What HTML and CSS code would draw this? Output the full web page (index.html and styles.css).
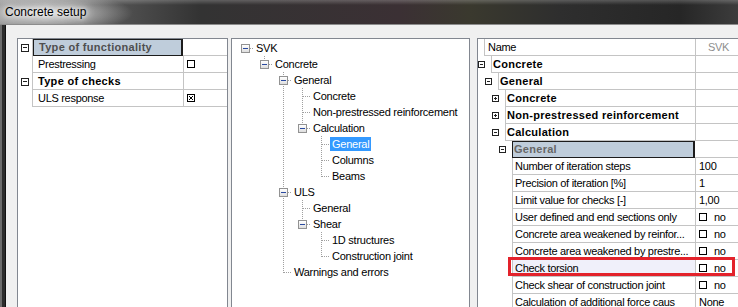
FILE: index.html
```html
<!DOCTYPE html>
<html lang="en">
<head>
    <meta charset="UTF-8">
    <title>Concrete setup</title>
    <link rel="stylesheet" href="styles.css">
</head>
<body>
    <div class="window">
        <div class="titlebar"><span class="title">Concrete setup</span></div>
        <div class="client">

            <!-- functionality / checks grid -->
            <div class="panel grid-panel">
                <div class="pg-row">
                    <div class="pg-gutter"><span class="box"></span></div>
                    <div class="pg-name cat sel">Type of functionality</div>
                    <div class="pg-value"></div>
                </div>
                <div class="pg-row">
                    <div class="pg-gutter"></div>
                    <div class="pg-name">Prestressing</div>
                    <div class="pg-value"><span class="check"></span></div>
                </div>
                <div class="pg-row">
                    <div class="pg-gutter"><span class="box"></span></div>
                    <div class="pg-name cat">Type of checks</div>
                    <div class="pg-value"></div>
                </div>
                <div class="pg-row">
                    <div class="pg-gutter"></div>
                    <div class="pg-name">ULS response</div>
                    <div class="pg-value">
                        <svg class="check-x" width="8" height="8" viewBox="0 0 8 8">
                            <rect x="0.5" y="0.5" width="7" height="7" fill="#fff" stroke="#000"/>
                            <path d="M2 2L6 6M6 2L2 6" stroke="#000" stroke-width="1"/>
                        </svg>
                    </div>
                </div>
            </div>

            <!-- tree -->
            <div class="panel tree-panel">
                <ul class="tree">
                    <li><div class="item"><span class="exp"></span><span class="label">SVK</span></div>
                        <ul>
                            <li><div class="item"><span class="exp"></span><span class="label">Concrete</span></div>
                                <ul>
                                    <li><div class="item"><span class="exp"></span><span class="label">General</span></div>
                                        <ul>
                                            <li><div class="item leaf"><span class="label">Concrete</span></div></li>
                                            <li><div class="item leaf"><span class="label">Non-prestressed reinforcement</span></div></li>
                                            <li><div class="item"><span class="exp"></span><span class="label">Calculation</span></div>
                                                <ul>
                                                    <li><div class="item leaf"><span class="label selected">General</span></div></li>
                                                    <li><div class="item leaf"><span class="label">Columns</span></div></li>
                                                    <li><div class="item leaf"><span class="label">Beams</span></div></li>
                                                </ul>
                                            </li>
                                        </ul>
                                    </li>
                                    <li><div class="item"><span class="exp"></span><span class="label">ULS</span></div>
                                        <ul>
                                            <li><div class="item leaf"><span class="label">General</span></div></li>
                                            <li><div class="item"><span class="exp"></span><span class="label">Shear</span></div>
                                                <ul>
                                                    <li><div class="item leaf"><span class="label">1D structures</span></div></li>
                                                    <li><div class="item leaf"><span class="label">Construction joint</span></div></li>
                                                </ul>
                                            </li>
                                        </ul>
                                    </li>
                                    <li><div class="item leaf"><span class="label">Warnings and errors</span></div></li>
                                </ul>
                            </li>
                        </ul>
                    </li>
                </ul>
            </div>

            <!-- properties -->
            <div class="panel prop-panel">
                <div class="pr-row">
                    <div class="pr-gap"></div>
                    <div class="pr-name head">Name</div>
                    <div class="pr-value head">SVK</div>
                </div>
                <div class="pr-row">
                    <div class="pr-exp"><span class="box small"></span></div>
                    <div class="pr-name cat">Concrete</div>
                    <div class="pr-value"></div>
                </div>
                <div class="pr-row">
                    <div class="ind1"></div>
                    <div class="pr-exp"><span class="box small"></span></div>
                    <div class="pr-name cat">General</div>
                    <div class="pr-value"></div>
                </div>
                <div class="pr-row">
                    <div class="ind2"></div>
                    <div class="pr-exp"><span class="box small plus"></span></div>
                    <div class="pr-name cat">Concrete</div>
                    <div class="pr-value"></div>
                </div>
                <div class="pr-row">
                    <div class="ind2"></div>
                    <div class="pr-exp"><span class="box small plus"></span></div>
                    <div class="pr-name cat">Non-prestressed reinforcement</div>
                    <div class="pr-value"></div>
                </div>
                <div class="pr-row">
                    <div class="ind2"></div>
                    <div class="pr-exp"><span class="box small"></span></div>
                    <div class="pr-name cat">Calculation</div>
                    <div class="pr-value"></div>
                </div>
                <div class="pr-row">
                    <div class="ind3"></div>
                    <div class="pr-exp"><span class="box small"></span></div>
                    <div class="pr-name cat sel">General</div>
                    <div class="pr-value"></div>
                </div>
                <div class="pr-row">
                    <div class="ind-leaf"></div>
                    <div class="pr-name">Number of iteration steps</div>
                    <div class="pr-value">100</div>
                </div>
                <div class="pr-row">
                    <div class="ind-leaf"></div>
                    <div class="pr-name">Precision of iteration [%]</div>
                    <div class="pr-value">1</div>
                </div>
                <div class="pr-row">
                    <div class="ind-leaf"></div>
                    <div class="pr-name">Limit value for checks [-]</div>
                    <div class="pr-value">1,00</div>
                </div>
                <div class="pr-row">
                    <div class="ind-leaf"></div>
                    <div class="pr-name">User defined and end sections only</div>
                    <div class="pr-value"><span class="check"></span>no</div>
                </div>
                <div class="pr-row">
                    <div class="ind-leaf"></div>
                    <div class="pr-name">Concrete area weakened by reinfor...</div>
                    <div class="pr-value"><span class="check"></span>no</div>
                </div>
                <div class="pr-row">
                    <div class="ind-leaf"></div>
                    <div class="pr-name">Concrete area weakened by prestre...</div>
                    <div class="pr-value"><span class="check"></span>no</div>
                </div>
                <div class="pr-row marked">
                    <div class="ind-leaf"></div>
                    <div class="pr-name hover">Check torsion</div>
                    <div class="pr-value"><span class="check"></span>no</div>
                    <div class="red-mark"></div>
                </div>
                <div class="pr-row">
                    <div class="ind-leaf"></div>
                    <div class="pr-name">Check shear of construction joint</div>
                    <div class="pr-value"><span class="check"></span>no</div>
                </div>
                <div class="pr-row">
                    <div class="ind-leaf"></div>
                    <div class="pr-name">Calculation of additional force caus</div>
                    <div class="pr-value">None</div>
                </div>
            </div>

        </div>
    </div>
</body>
</html>
```

FILE: styles.css
```css
html, body {
    margin: 0;
    padding: 0;
}
body {
    width: 738px;
    height: 307px;
    overflow: hidden;
    background: #f0f0f0;
    font-family: "Liberation Sans", Arial, sans-serif;
    font-size: 11px;
    color: #000;
}

/* window chrome */
.titlebar {
    height: 25px;
    box-sizing: border-box;
    display: flex;
    align-items: center;
    padding-left: 5px;
    border-bottom: 1px solid #8c8c8c;
    background:
        linear-gradient(to bottom, rgba(255, 255, 255, 0.22) 0, rgba(255, 255, 255, 0) 5px),
        radial-gradient(ellipse 85px 20px at 48px 13px, rgba(225, 225, 225, 0.95), rgba(225, 225, 225, 0)),
        linear-gradient(to right, #8a8a8a 0, #555 110px, #333 200px, #3b3034 400px, #3a392e 470px, #2e2e2e 560px, #262626 680px, #3c3c3c 738px);
}
.title {
    font-size: 12px;
    color: #000;
    text-shadow: 0 0 4px #fff, 0 0 8px #fff, 0 0 12px #eee;
}
.client {
    display: flex;
    height: 282px;
    box-sizing: border-box;
    padding: 13px 0 0 17px;
    background: linear-gradient(to right, #6c6c6c 0 2px, #2c2c2c 2px 5px, #111 5px 6px, #f0f0f0 6px);
}
.panel {
    flex: none;
    background: #fff;
    box-sizing: border-box;
    border: 1px solid #828790;
    border-bottom: 0;
    overflow: hidden;
}

/* left grid */
.grid-panel {
    width: 211px;
    margin-right: 3px;
}
.pg-row {
    display: flex;
    height: 17px;
    line-height: 16px;
    letter-spacing: -0.3px;
    white-space: nowrap;
}
.pg-gutter {
    width: 15px;
    flex: none;
    display: flex;
    align-items: center;
    padding-left: 3px;
    box-sizing: border-box;
    border-right: 1px solid #c4c4c4;
}
.pg-name {
    width: 150px;
    flex: none;
    box-sizing: border-box;
    padding-left: 5px;
    border-bottom: 1px solid #c4c4c4;
}
.pg-value {
    flex: 1;
    display: flex;
    align-items: center;
    padding-left: 3px;
    border-left: 1px solid #c4c4c4;
    border-bottom: 1px solid #c4c4c4;
}
.cat {
    font-weight: bold;
    letter-spacing: 0.3px;
}
.pg-name.sel {
    background: #bfcddb;
    color: #4f4f4f;
    border: 1px solid #1c1c1c;
    border-right-width: 2px;
    padding-left: 5px;
    line-height: 14px;
}
.pg-name.sel + .pg-value {
    border-left: 0;
}

/* expander boxes */
.box {
    width: 8px;
    height: 8px;
    box-sizing: border-box;
    border: 1px solid #222;
    background: linear-gradient(#222, #222) center / 4px 1px no-repeat, #fff;
}
.box.small {
    width: 7px;
    height: 7px;
    background: linear-gradient(#222, #222) center / 3px 1px no-repeat, #fff;
}
.box.small.plus {
    background:
        linear-gradient(#222, #222) center / 3px 1px no-repeat,
        linear-gradient(#222, #222) center / 1px 3px no-repeat,
        #fff;
}
.check {
    display: inline-block;
    width: 8px;
    height: 8px;
    box-sizing: border-box;
    border: 1px solid #000;
    background: #fff;
    margin-right: 7px;
}
.check-x {
    display: block;
}

/* tree */
.tree-panel {
    width: 239px;
    margin-right: 7px;
    padding-top: 1px;
    letter-spacing: -0.25px;
}
.tree, .tree ul {
    list-style: none;
    margin: 0;
    padding: 0;
}
.tree {
    padding-left: 5px;
}
.tree ul {
    padding-left: 19px;
}
.tree li li {
    background: repeating-linear-gradient(to bottom, #a0a0a0 0 1px, transparent 1px 2px) 8px 0 / 1px 100% no-repeat;
}
.tree li li:last-child {
    background-size: 1px 9px;
}
.item {
    height: 16px;
    display: flex;
    align-items: center;
    padding-left: 4px;
    white-space: nowrap;
    background: repeating-linear-gradient(to right, #a0a0a0 0 1px, transparent 1px 2px) 9px 8px / 8px 1px no-repeat;
}
.item.leaf {
    padding-left: 19px;
}
.exp {
    width: 9px;
    height: 9px;
    flex: none;
    box-sizing: border-box;
    margin-right: 6px;
    border: 1px solid #929292;
    background:
        linear-gradient(#2a4aa0, #2a4aa0) center / 5px 1px no-repeat,
        linear-gradient(#fff, #dedede);
}
.label {
    line-height: 14px;
    padding: 0 2px;
    margin-left: -2px;
}
.label.selected {
    background: #3399ff;
    color: #fff;
}

/* property grid */
.prop-panel {
    width: 280px;
    border-right: 0;
}
.pr-row {
    display: flex;
    height: 17px;
    line-height: 16px;
    white-space: nowrap;
    letter-spacing: -0.3px;
}
.pr-row.marked {
    position: relative;
}
.pr-gap {
    width: 6px;
    flex: none;
}
.ind1 { width: 7px; flex: none; }
.ind2 { width: 14px; flex: none; }
.ind3 { width: 21px; flex: none; }
.ind-leaf { width: 34px; flex: none; }
.pr-exp {
    width: 13px;
    flex: none;
    display: flex;
    align-items: center;
}
.pr-name {
    flex: 1;
    min-width: 0;
    overflow: hidden;
    box-sizing: border-box;
    padding-left: 2px;
    border-left: 1px solid #c4c4c4;
    border-bottom: 1px solid #c4c4c4;
}
.pr-name.cat {
    padding-left: 1px;
    letter-spacing: 0.28px;
}
.pr-name.head {
    padding-left: 3px;
}
.pr-value {
    width: 62px;
    flex: none;
    display: flex;
    align-items: center;
    box-sizing: border-box;
    padding-left: 3px;
    border-left: 1px solid #c4c4c4;
    border-bottom: 1px solid #c4c4c4;
}
.pr-value.head {
    color: #8e8e8e;
    padding-left: 12px;
}
.pr-name.sel {
    background: #bfcddb;
    color: #666;
    border: 1px solid #1c1c1c;
    border-right-width: 2px;
    line-height: 14px;
}
.pr-name.sel + .pr-value {
    border-left: 0;
}
.pr-name.hover {
    background: #f0f0fa;
    text-decoration: underline;
}
.red-mark {
    position: absolute;
    left: 30px;
    top: -3px;
    width: 227px;
    height: 19px;
    box-sizing: border-box;
    border: 3px solid #e3222b;
}
```
